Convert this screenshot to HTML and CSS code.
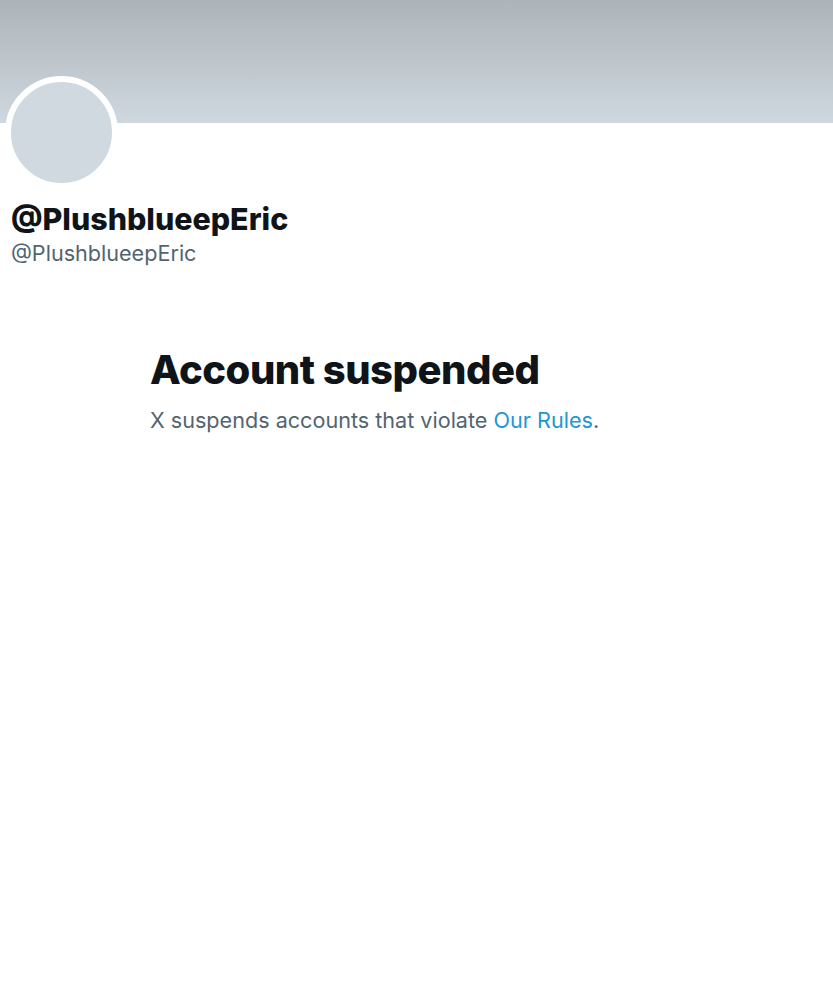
FILE: index.html
```html
<!DOCTYPE html>
<html lang="en">
<head>
    <meta charset="UTF-8">
    <meta name="viewport" content="width=device-width, initial-scale=1.0">
    <title>@PlushblueepEric</title>
    <link rel="stylesheet" href="styles.css">
</head>
<body>
    <div class="banner"></div>

    <div class="profile">
        <div class="avatar"></div>
        <div class="name">@PlushblueepEric</div>
        <div class="handle">@PlushblueepEric</div>
    </div>

    <div class="notice">
        <h1>Account suspended</h1>
        <p>X suspends accounts that violate <a href="#">Our Rules</a>.</p>
    </div>
</body>
</html>
```

FILE: styles.css
```css
body {
    margin: 0;
    background: #fff;
    font-family: Inter, "Noto Sans", "Liberation Sans", sans-serif;
    color: #0f1419;
}

.banner {
    height: 123px;
    background: linear-gradient(to bottom, #adb4b9, #cfd8df);
}

.profile {
    padding: 0 11px;
}

.avatar {
    width: 101px;
    height: 101px;
    margin-top: -47px;
    margin-left: -6px;
    border: 6px solid #fff;
    border-radius: 50%;
    background: #d0d9e0;
}

.name {
    margin-top: 12px;
    font-size: 30.4px;
    font-weight: 800;
    line-height: 36px;
}

.handle {
    margin-top: 2px;
    font-size: 21.6px;
    line-height: 28px;
    color: #536471;
}

.notice {
    padding: 79px 0 0 150px;
}

.notice h1 {
    margin: 0;
    font-size: 40px;
    font-weight: 800;
    letter-spacing: -0.5px;
    line-height: 48px;
}

.notice p {
    margin: 12px 0 0;
    font-size: 21.6px;
    line-height: 28px;
    color: #536471;
}

.notice a {
    color: #2096d4;
    text-decoration: none;
}
```
